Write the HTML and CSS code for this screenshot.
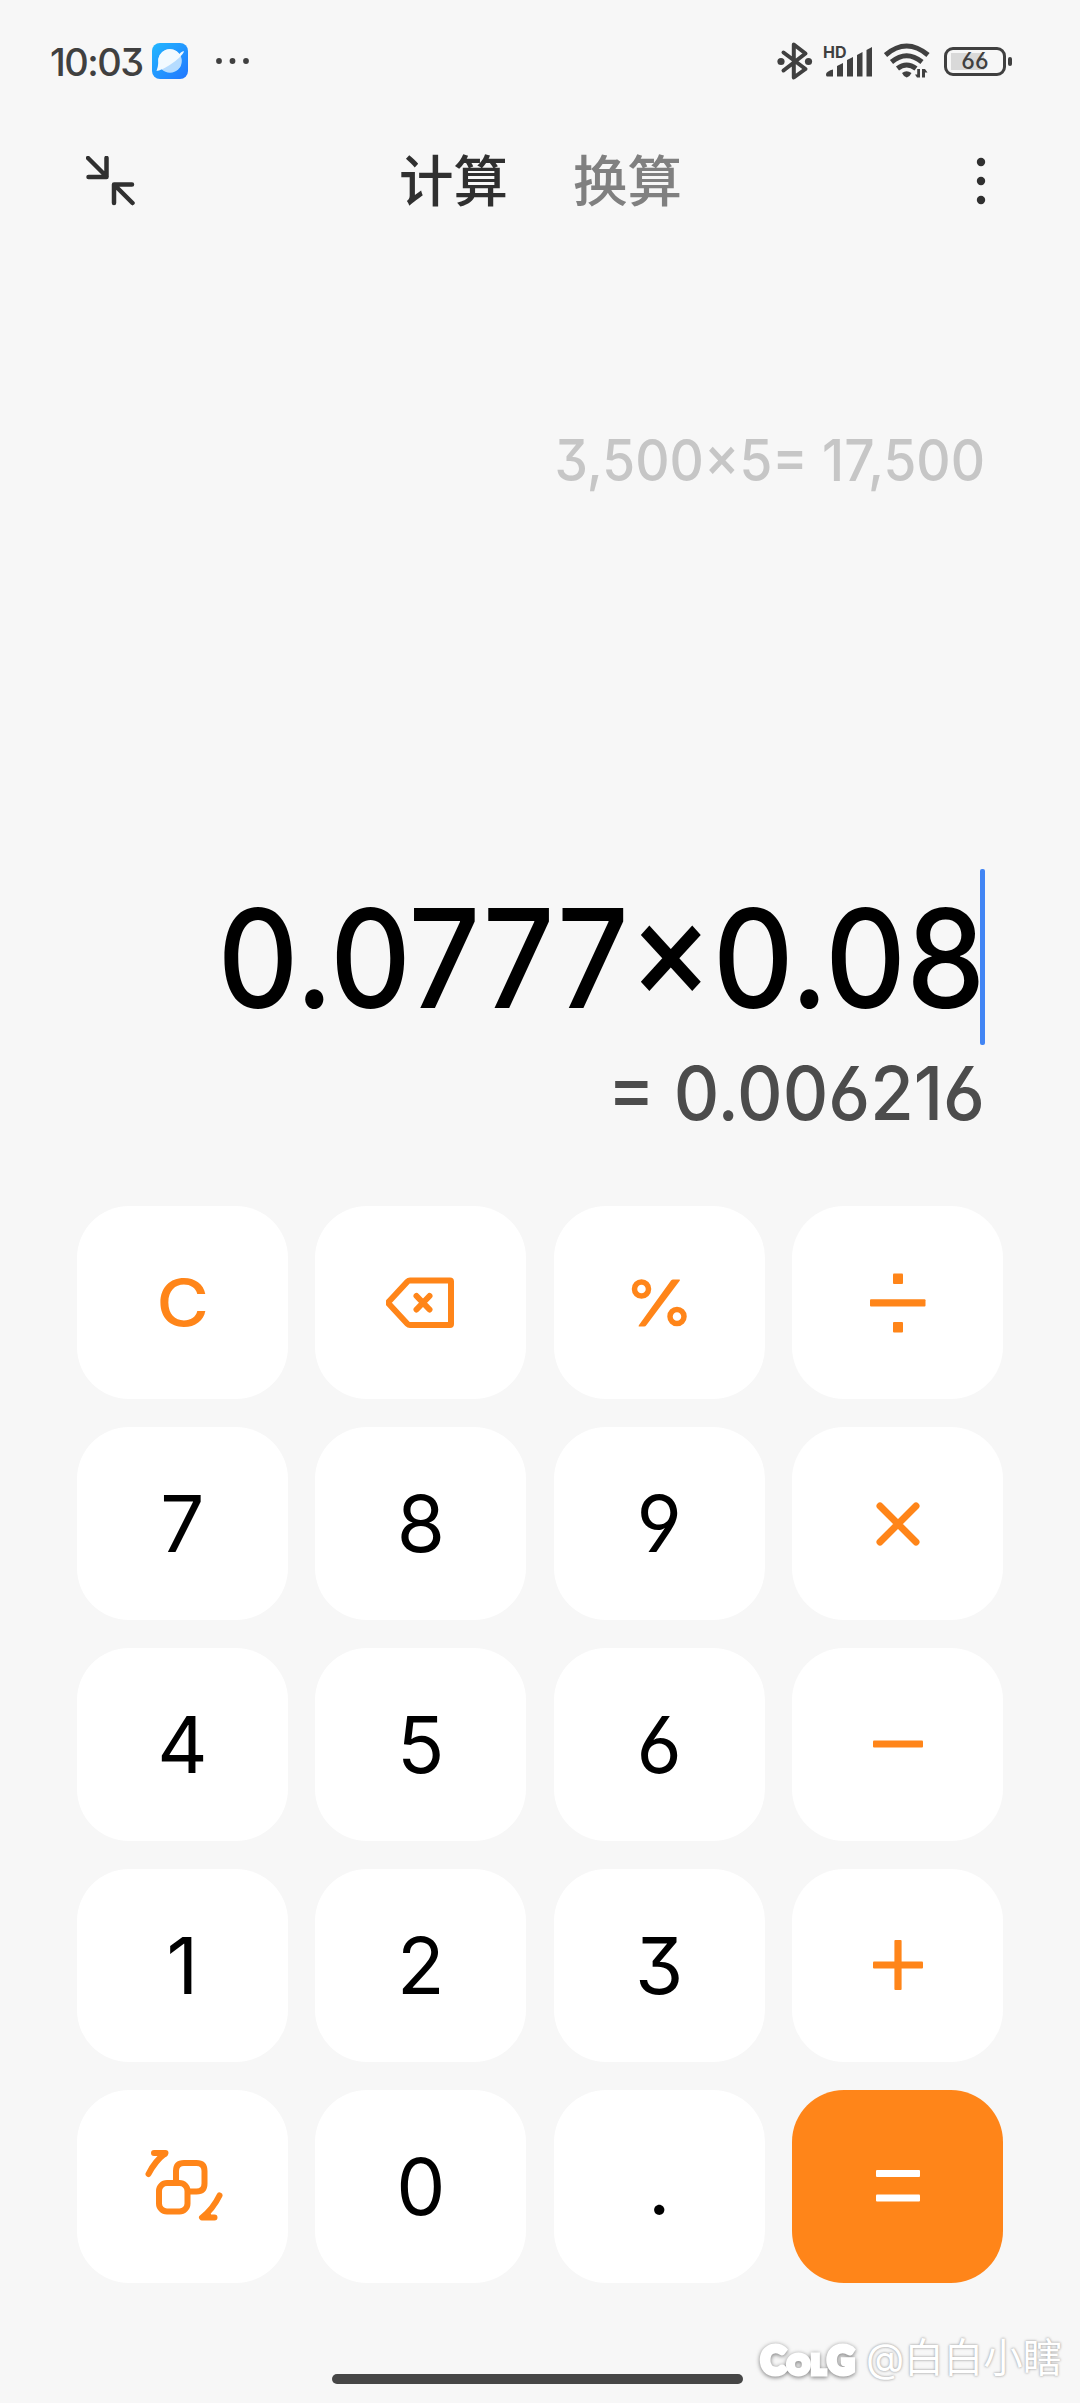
FILE: index.html
```html
<!DOCTYPE html>
<html lang="zh-CN">
<head>
    <meta charset="UTF-8">
    <meta name="viewport" content="width=device-width, initial-scale=1.0">
    <title>计算器</title>
    <link rel="stylesheet" href="styles.css">
</head>
<body>
    <div class="statusbar">
        <span class="time">10:03</span>
        <svg class="app-icon" width="36" height="36" viewBox="0 0 36 36">
            <defs>
                <linearGradient id="sky" x1="0" y1="0" x2="1" y2="1">
                    <stop offset="0" stop-color="#22b8ff"/>
                    <stop offset="1" stop-color="#2276ff"/>
                </linearGradient>
            </defs>
            <rect width="36" height="36" rx="8" fill="url(#sky)"/>
            <circle cx="18" cy="18" r="11.8" fill="#b5dcff"/>
            <path d="M4.500 28C10 28 29 16 32 8.500C31 8 29 9 27.500 11A11.800 11.800 0 0 0 6.300 20Q6 24 4.500 28Z" fill="#f2faff"/>
        </svg>
        <svg class="more" width="36" height="8" viewBox="0 0 36 8">
            <circle cx="4" cy="4" r="2.900"/>
            <circle cx="17.500" cy="4" r="2.900"/>
            <circle cx="31" cy="4" r="2.900"/>
        </svg>
        <div class="status-icons">
            <svg width="36" height="40" viewBox="0 0 36 40">
                <path d="M6.500 11.500L28.500 28L16.800 36.500V3.500L28.500 12.500L6.500 29.500" fill="none" stroke="#404040" stroke-width="4" stroke-linejoin="round" stroke-linecap="round"/>
                <circle cx="4" cy="20.500" r="3.600"/>
                <circle cx="31.500" cy="20.500" r="3.600"/>
            </svg>
            <div class="signal">
                <span class="hd">HD</span>
                <svg width="48" height="32" viewBox="0 0 48 32">
                    <path d="M1 28Q2 25 8 23.500V30.500H2Q1 30.500 1 28Z"/>
                    <path d="M12 20L18 17V30.500H12Z"/>
                    <path d="M22 14L28 11V30.500H22Z"/>
                    <path d="M32 9L37.500 6V30.500H32Z"/>
                    <path d="M41.500 4L47 1V30.500H41.500Z"/>
                </svg>
            </div>
            <svg class="wifi" width="46" height="36" viewBox="0 0 46 36">
                <g fill="none" stroke="#404040" stroke-width="5">
                    <path d="M1.500 12Q22.500 -6 44 12"/>
                    <path d="M7.500 19Q22.500 6.500 38 19"/>
                    <path d="M13.500 25.500Q22.500 18.500 32 25.500"/>
                </g>
                <path d="M18 30Q22.500 26.500 27.500 30Q26 33.500 22.700 34.500Q19.500 33.500 18 30Z"/>
                <path d="M36 26V34.500H33L31 31.500H33.200V26ZM38 34.500V26H41L43.500 29.500H41V34.500Z"/>
            </svg>
            <div class="battery"><span>66</span></div>
        </div>
    </div>

    <div class="header">
        <svg width="50" height="50" viewBox="0 0 50 50">
            <path d="M2 2L20.500 20.500M20.500 2V21H2.500M46 28.500H28V47M28.500 29L46.500 47" fill="none" stroke="#303030" stroke-width="4.500" stroke-linecap="round" stroke-linejoin="round"/>
        </svg>
        <div class="tabs">
            <div class="tab active">计算</div>
            <div class="tab">换算</div>
        </div>
        <svg width="10" height="50" viewBox="0 0 10 50">
            <circle cx="5" cy="6" r="4.200"/>
            <circle cx="5" cy="25" r="4.200"/>
            <circle cx="5" cy="44" r="4.200"/>
        </svg>
    </div>

    <div class="display">
        <div class="history">3,500×5= 17,500</div>
        <div class="expression"><span>0.0777×0.08</span><i class="cursor"></i></div>
        <div class="result">= 0.006216</div>
    </div>

    <div class="keypad">
        <button class="key clear"><span>C</span></button>
        <button class="key">
            <svg width="70" height="52" viewBox="0 0 70 52">
                <path d="M24 3.500H64Q65 3.500 65 4.500V47Q65 48 64 48H24Q22.500 48 21.500 47L3 27Q2 25.700 3 24.500L21.500 4.500Q22.500 3.500 24 3.500ZM30.500 19L43.500 32.500M43.500 19L30.500 32.500" fill="none" stroke="#ff8519" stroke-width="6" stroke-linecap="round" stroke-linejoin="round"/>
            </svg>
        </button>
        <button class="key">
            <svg width="56" height="48" viewBox="0 0 56 48">
                <g fill="none" stroke="#ff8519" stroke-width="5.500">
                    <circle cx="10.500" cy="10" r="7"/>
                    <circle cx="46" cy="37.500" r="7"/>
                </g>
                <path d="M42 .5H48.500Q49.500 .5 48.500 2L15.500 46Q14.500 47.500 13 47.500H8Q7 47.500 8 46L40 1.500Q41 .5 42 .5Z" fill="#ff8519"/>
            </svg>
        </button>
        <button class="key">
            <svg width="56" height="60" viewBox="0 0 56 60" fill="#ff8519">
                <rect x="23" y=".5" width="10" height="10.500" rx="1"/>
                <rect y="26.300" width="55.500" height="7.200" rx="1"/>
                <rect x="23" y="49" width="10" height="10.500" rx="1"/>
            </svg>
        </button>

        <button class="key">7</button>
        <button class="key">8</button>
        <button class="key">9</button>
        <button class="key">
            <svg width="44" height="44" viewBox="0 0 44 44">
                <path d="M4 4L40 40M40 4L4 40" stroke="#ff8519" stroke-width="7" stroke-linecap="round"/>
            </svg>
        </button>

        <button class="key">4</button>
        <button class="key">5</button>
        <button class="key">6</button>
        <button class="key">
            <svg width="50" height="8" viewBox="0 0 50 8">
                <rect y=".4" width="50" height="7.200" rx="1" fill="#ff8519"/>
            </svg>
        </button>

        <button class="key">1</button>
        <button class="key">2</button>
        <button class="key">3</button>
        <button class="key">
            <svg width="50" height="50" viewBox="0 0 50 50" fill="#ff8519">
                <rect y="21.400" width="50" height="7.200" rx="1"/>
                <rect x="21.400" width="7.200" height="50" rx="1"/>
            </svg>
        </button>

        <button class="key">
            <svg class="convert" width="78" height="74" viewBox="0 0 78 74" fill="none" stroke="#ff8519" stroke-width="6" stroke-linecap="round" stroke-linejoin="round">
                <rect x="14" y="34" width="28.500" height="28.500" rx="8"/>
                <path d="M31 32V22Q31 14 39 14H51.500Q59.500 14 59.500 22V34.500Q59.500 42.500 51.500 42.500H45"/>
                <path d="M9 4H20.500Q10 12 3.500 25M16 7L20 5"/>
                <path d="M74.500 46.500Q68 60 57 68.500H69.500M59 68L63 65.500"/>
            </svg>
        </button>
        <button class="key">0</button>
        <button class="key">.</button>
        <button class="key equals">
            <svg width="44" height="32" viewBox="0 0 44 32" fill="#fff">
                <rect width="44" height="7" rx="1"/>
                <rect y="24.500" width="44" height="7" rx="1"/>
            </svg>
        </button>
    </div>

    <div class="footer">
        <div class="home-bar"></div>
        <div class="watermark">
            <span class="logo">C<small>OL</small>G</span>
            <span class="user">@白白小瞎</span>
        </div>
    </div>
</body>
</html>
```
FILE: styles.css
```css
* {
    box-sizing: border-box;
}

body {
    margin: 0;
    width: 1080px;
    height: 2403px;
    display: flex;
    flex-direction: column;
    overflow: hidden;
    background: #f7f7f7;
    font-family: Inter, "Noto Sans CJK SC", sans-serif;
    font-feature-settings: "cv03", "cv04", "cv09";
}

svg {
    display: block;
    flex: none;
}

/* Status bar */
.statusbar {
    height: 122px;
    padding: 0 74px 0 50px;
    display: flex;
    align-items: center;
    fill: #404040;
    color: #404040;
}

.time {
    width: 102px;
    padding-top: 2px;
    font-size: 38px;
    font-weight: 500;
    letter-spacing: -1.5px;
}

.more {
    margin-left: 27px;
}

.status-icons {
    margin-left: auto;
    display: flex;
    align-items: center;
}

.signal {
    position: relative;
    margin: 2px 0 0 12px;
}

.hd {
    position: absolute;
    left: -2px;
    top: -4px;
    font-size: 16px;
    font-weight: 700;
    line-height: 20px;
}

.wifi {
    margin-left: 11px;
}

.battery {
    position: relative;
    width: 62px;
    height: 29px;
    margin-left: 14px;
    padding: 3px;
    border: 3px solid #404040;
    border-radius: 9px;
    font-size: 23px;
    font-weight: 500;
    line-height: 17px;
    text-align: center;
    background: linear-gradient(#d9d9d9, #d9d9d9) 4px 3px / 33px 17px no-repeat;
}

.battery::after {
    content: "";
    position: absolute;
    right: -9px;
    top: 7px;
    width: 4px;
    height: 9px;
    border-radius: 2px;
    background: #404040;
}

/* Header */
.header {
    height: 118px;
    padding: 0 94px 0 86px;
    display: flex;
    align-items: center;
    fill: #303030;
}

.tabs {
    display: flex;
    gap: 65px;
    margin: 0 auto 0 263px;
}

.tab {
    font-size: 54.5px;
    font-weight: 500;
    line-height: 80px;
    color: #808080;
}

.tab.active {
    color: #303030;
}

/* Display */
.display {
    height: 966px;
    padding-right: 95px;
    display: flex;
    flex-direction: column;
    align-items: flex-end;
    white-space: nowrap;
}

.history {
    height: 80px;
    margin-top: 181px;
    font-size: 57px;
    font-weight: 450;
    line-height: 80px;
    color: #c6c6c6;
    transform: scaleX(.934);
    transform-origin: right;
}

.expression {
    position: relative;
    height: 176px;
    margin-top: 368px;
    font-size: 137px;
    font-weight: 500;
    line-height: 178px;
    color: #000;
}

.expression span {
    display: block;
    transform: scaleX(.917);
    transform-origin: right;
}

.cursor {
    position: absolute;
    right: 0;
    top: 0;
    width: 5px;
    height: 176px;
    border-radius: 2px;
    background: #4285f4;
}

.result {
    height: 96px;
    font-size: 74px;
    font-weight: 500;
    line-height: 96px;
    color: #4c4c4c;
    transform: scaleX(.955);
    transform-origin: right;
}

/* Keypad */
.keypad {
    height: 1077px;
    margin: 0 77px;
    display: grid;
    grid-template-columns: repeat(4, 1fr);
    grid-template-rows: repeat(5, 1fr);
    gap: 27.5px;
}

.key {
    display: flex;
    align-items: center;
    justify-content: center;
    padding: 0;
    border: none;
    border-radius: 52px;
    background: #fff;
    color: #000;
    font-family: inherit;
    font-feature-settings: inherit;
    font-size: 78px;
}

.clear {
    font-size: 65px;
    font-weight: 500;
    color: #ff8519;
}

.clear span {
    transform: scaleX(1.1);
}

.equals {
    background: #ff8519;
}

.convert {
    margin-left: 4px;
}

/* Footer */
.footer {
    position: relative;
    flex: 1;
}

.home-bar {
    width: 411px;
    height: 10px;
    margin: 91px 0 0 332px;
    border-radius: 5px;
    background: #464646;
}

.watermark {
    position: absolute;
    left: 761px;
    top: 44px;
    display: flex;
    align-items: center;
    color: #fff;
    line-height: 50px;
    white-space: nowrap;
}

.logo {
    width: 105px;
    padding-top: 8px;
    font-family: Lato, sans-serif;
    font-size: 37px;
    font-weight: 900;
    letter-spacing: 2px;
    -webkit-text-stroke: 5px #fff;
    filter: drop-shadow(0 1px 2px #777);
}

.logo small {
    font-size: 27px;
}

.user {
    font-size: 39.5px;
    text-shadow: 0 0 3px #aaa, 0 0 2px #bbb;
}
```
